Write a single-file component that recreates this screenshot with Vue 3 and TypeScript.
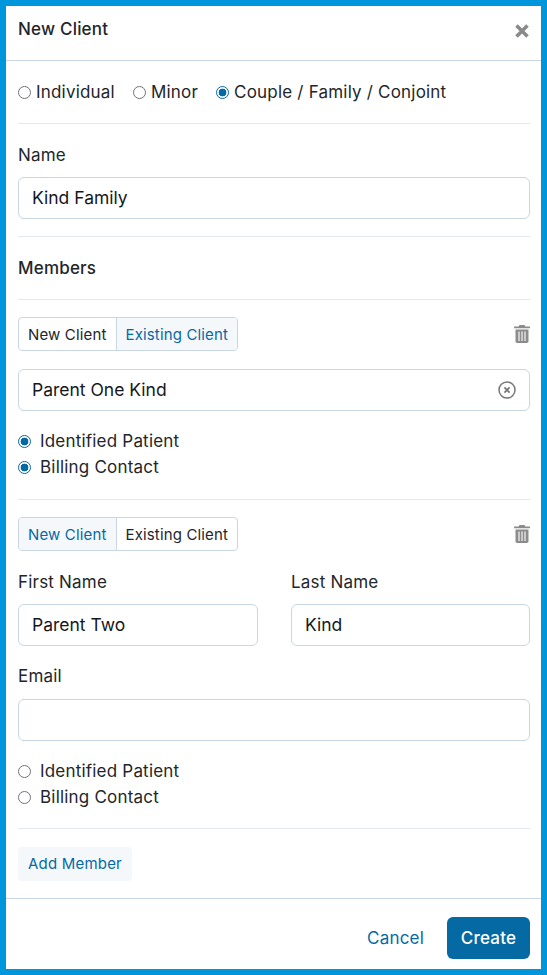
<script setup lang="ts">
const kinds = [
  { label: 'Individual', on: false },
  { label: 'Minor', on: false },
  { label: 'Couple / Family / Conjoint', on: true },
]
</script>

<template>
  <div class="frame">
    <header class="head">
      <span class="title">New Client</span>
      <svg class="close" width="16" height="16" viewBox="0 0 16 16"><path d="M2.5 2.5l11 11M13.5 2.5l-11 11" stroke="#8a8a8a" stroke-width="3.6" /></svg>
    </header>
    <main class="body">
      <div class="kinds">
        <label v-for="k in kinds" :key="k.label" class="kind">
          <span class="radio" :class="{ on: k.on }"></span>{{ k.label }}
        </label>
      </div>
      <hr class="rule r-kinds" />
      <div class="lbl name-lbl">Name</div>
      <div class="input">Kind Family</div>
      <hr class="rule r-name" />
      <div class="lbl members">Members</div>
      <hr class="rule r-members" />

      <div class="toprow">
        <div class="seg">
          <span class="s">New Client</span>
          <span class="s active">Existing Client</span>
        </div>
        <svg class="trash" width="16" height="18" viewBox="0 0 16 18"><path d="M5.4 0h5.2l.7 1.4H16v1.8H0V1.4h4.7zM1.5 4.5h13v11.8c0 .9-.7 1.7-1.6 1.7H3.1c-.9 0-1.6-.8-1.6-1.7z" fill="#8c8c8c" /><path d="M5 6.5v9.5M8 6.5v9.5M11 6.5v9.5" stroke="#fff" stroke-width="1.1" /></svg>
      </div>
      <div class="input clear-input">
        Parent One Kind
        <svg class="clear" width="18" height="18" viewBox="0 0 18 18"><circle cx="9" cy="9" r="8" fill="none" stroke="#777" stroke-width="1.5" /><path d="M6.4 6.4l5.2 5.2M11.6 6.4l-5.2 5.2" stroke="#777" stroke-width="1.8" /></svg>
      </div>
      <div class="checks">
        <label class="check"><span class="radio on"></span>Identified Patient</label>
        <label class="check"><span class="radio on"></span>Billing Contact</label>
      </div>
      <hr class="rule r-one" />

      <div class="toprow">
        <div class="seg">
          <span class="s active">New Client</span>
          <span class="s">Existing Client</span>
        </div>
        <svg class="trash" width="16" height="18" viewBox="0 0 16 18"><path d="M5.4 0h5.2l.7 1.4H16v1.8H0V1.4h4.7zM1.5 4.5h13v11.8c0 .9-.7 1.7-1.6 1.7H3.1c-.9 0-1.6-.8-1.6-1.7z" fill="#8c8c8c" /><path d="M5 6.5v9.5M8 6.5v9.5M11 6.5v9.5" stroke="#fff" stroke-width="1.1" /></svg>
      </div>
      <div class="names">
        <div>
          <div class="lbl">First Name</div>
          <div class="input">Parent Two</div>
        </div>
        <div>
          <div class="lbl">Last Name</div>
          <div class="input">Kind</div>
        </div>
      </div>
      <div class="lbl email-lbl">Email</div>
      <div class="input"></div>
      <div class="checks two">
        <label class="check"><span class="radio"></span>Identified Patient</label>
        <label class="check"><span class="radio"></span>Billing Contact</label>
      </div>
      <hr class="rule r-two" />
      <button class="add">Add Member</button>
    </main>
    <footer class="foot">
      <button class="cancel">Cancel</button>
      <button class="create">Create</button>
    </footer>
  </div>
</template>

<style scoped>
.frame {
  box-sizing: border-box;
  width: 547px;
  height: 975px;
  border: 6px solid #0096db;
  background: #fff;
  font-family: Inter, "Liberation Sans", sans-serif;
  letter-spacing: 0.2px;
  color: #22262b;
  display: flex;
  flex-direction: column;
}
.head {
  box-sizing: border-box;
  height: 55px;
  flex: none;
  padding: 0 11px 0 12px;
  border-bottom: 1px solid #c9d6e4;
  display: flex;
  justify-content: space-between;
  align-items: flex-start;
}
.title {
  font-size: 17px;
  font-weight: 500;
  line-height: 20px;
  margin-top: 13px;
}
.close { margin-top: 17px; }
.body {
  flex: 1;
  padding: 0 11px 0 12px;
  display: flex;
  flex-direction: column;
}
.kinds {
  display: flex;
  gap: 18px;
  height: 20px;
  margin-top: 21px;
}
.kind {
  display: flex;
  align-items: center;
  font-size: 17px;
  line-height: 20px;
}
.radio {
  box-sizing: border-box;
  flex: none;
  width: 13px;
  height: 13px;
  border-radius: 50%;
  border: 1px solid #6e7277;
  background: #fff;
  margin-right: 5px;
}
.radio.on {
  border: 1.5px solid #0569a3;
  background: radial-gradient(circle, #0569a3 0 3.6px, #fff 4.2px);
}
.rule {
  margin: 0;
  border: 0;
  border-top: 1px solid #e5e8ec;
  flex: none;
}
.r-kinds { margin-top: 21px; }
.lbl {
  font-size: 17px;
  line-height: 20px;
}
.name-lbl { margin-top: 21px; margin-bottom: 12px; }
.input {
  box-sizing: border-box;
  height: 42px;
  border: 1px solid #c9d6e4;
  border-radius: 6px;
  padding: 0 13px;
  font-size: 17.5px;
  letter-spacing: 0;
  line-height: 40px;
  color: #14181d;
}
.r-name { margin-top: 17px; }
.members { margin-top: 21px; font-weight: 500; }
.r-members { margin-top: 21px; }
.toprow {
  display: flex;
  justify-content: space-between;
  align-items: center;
  margin-top: 17px;
}
.seg {
  display: flex;
  height: 34px;
  box-sizing: border-box;
  border: 1px solid #c9d6e4;
  border-radius: 4px;
  overflow: hidden;
}
.s {
  font-size: 15px;
  letter-spacing: 0.15px;
  line-height: 32px;
  padding: 1px 9px 0;
  color: #22262b;
}
.s + .s { border-left: 1px solid #c9d6e4; }
.s.active {
  background: #f5f8fb;
  color: #0569a3;
}
.clear-input {
  margin-top: 18px;
  position: relative;
}
.clear {
  position: absolute;
  right: 13px;
  top: 11px;
}
.checks {
  display: flex;
  flex-direction: column;
  gap: 6px;
  margin-top: 20px;
}
.check {
  display: flex;
  align-items: center;
  font-size: 17px;
  line-height: 20px;
}
.check .radio { margin-right: 9px; }
.r-one { margin-top: 22px; }
.names {
  display: grid;
  grid-template-columns: 240px 239px;
  column-gap: 33px;
  margin-top: 21px;
}
.names .lbl { margin-bottom: 12px; }
.email-lbl { margin-top: 20px; margin-bottom: 13px; }
.two { margin-top: 20px; }
.r-two { margin-top: 21px; }
.add {
  align-self: flex-start;
  margin-top: 18px;
  height: 34px;
  padding: 0 10px 2px;
  border: 0;
  border-radius: 4px;
  background: #f5f8fb;
  color: #0569a3;
  font: 15px Inter, "Liberation Sans", sans-serif;
  letter-spacing: 0.2px;
}
.foot {
  box-sizing: border-box;
  flex: none;
  height: 71px;
  border-top: 1px solid #c9d6e4;
  padding: 18px 11px 0 0;
  display: flex;
  justify-content: flex-end;
  align-items: flex-start;
  gap: 23px;
}
.cancel {
  height: 42px;
  padding: 0;
  border: 0;
  background: none;
  color: #0569a3;
  font: 17px Inter, "Liberation Sans", sans-serif;
  letter-spacing: 0.2px;
}
.create {
  height: 42px;
  width: 83px;
  padding: 0;
  border: 0;
  border-radius: 6px;
  background: #0569a3;
  color: #fff;
  font: 500 17px Inter, "Liberation Sans", sans-serif;
  letter-spacing: 0.2px;
}
</style>
